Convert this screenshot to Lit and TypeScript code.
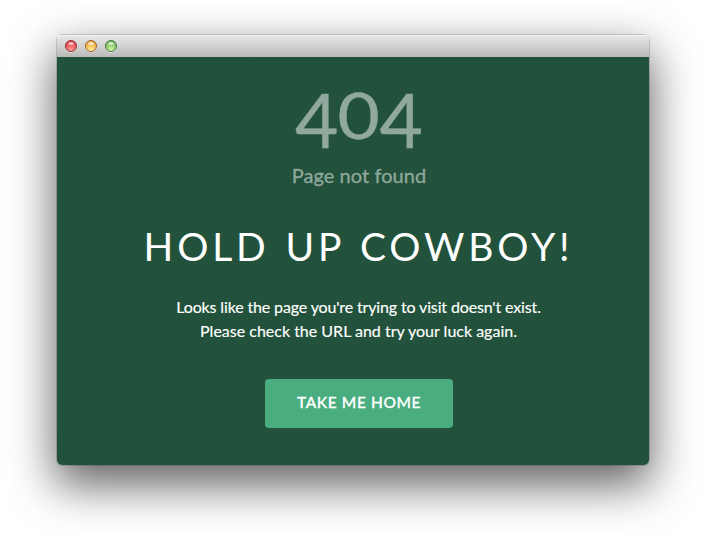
import { LitElement, html, css } from "lit";
import { customElement } from "lit/decorators.js";

@customElement("app-root")
export class AppRoot extends LitElement {
  static styles = css`
    :host {
      display: block;
      box-sizing: border-box;
      height: 544px;
      padding: 35px 57px 0 57px;
      background: #fff;
      overflow: hidden;
      font-family: Lato, "Open Sans", sans-serif;
    }
    .window {
      height: 430px;
      border-radius: 5px;
      box-shadow: 0 0 0 1px rgba(0, 0, 0, 0.16), 0 18px 46px 2px rgba(0, 0, 0, 0.62);
    }
    .bar {
      box-sizing: border-box;
      display: flex;
      gap: 8px;
      height: 22px;
      padding: 5px 8px;
      border-radius: 4px 4px 0 0;
      background: linear-gradient(#e9e9e9, #b9b9b9);
      box-shadow: inset 0 1px #f4f4f4;
    }
    .bar svg {
      display: block;
      width: 12px;
      height: 13px;
    }
    .page {
      box-sizing: border-box;
      display: flex;
      flex-direction: column;
      align-items: center;
      height: 408px;
      padding: 26px 0 0 9px;
      border-radius: 0 0 5px 5px;
      background: #22523b;
      color: #fff;
      white-space: nowrap;
    }
    .code {
      display: flex;
      gap: 2px;
      height: 72px;
      padding-left: 3px;
      align-items: flex-start;
      color: #90a89d;
      font-size: 75px;
      line-height: 72px;
      -webkit-text-stroke: 0.4px #90a89d;
    }
    .zero {
      display: inline-block;
      font-size: 64px;
      line-height: 63px;
      transform: scaleX(1.14);
    }
    .sub {
      height: 26px;
      margin-top: 7px;
      padding-left: 3px;
      color: #90a89d;
      font-size: 20px;
      line-height: 26px;
      letter-spacing: 0.05px;
      -webkit-text-stroke: 0.3px #90a89d;
    }
    h1 {
      height: 48px;
      margin: 34px 0 0;
      padding-left: 2px;
      font-size: 39px;
      font-weight: 400;
      line-height: 48px;
      letter-spacing: 3.85px;
      word-spacing: 2px;
    }
    .text {
      margin: 25px 0 0;
      padding-left: 2px;
      text-align: center;
      font-size: 16px;
      line-height: 24px;
      -webkit-text-stroke: 0.15px #fff;
    }
    .line {
      display: block;
    }
    .tight {
      letter-spacing: -0.14px;
    }
    button {
      width: 188px;
      height: 49px;
      margin: 36px 0 0 3px;
      padding: 0 0 3px;
      border: 0;
      border-radius: 4px;
      background: #49ad7f;
      color: #fff;
      font: 500 15.5px/46px Lato, sans-serif;
      letter-spacing: 0.6px;
      -webkit-text-stroke: 0.3px #fff;
    }
  `;

  private light(id: string, rim: string, base: string, glow: string) {
    return html`<svg viewBox="0 0 12 13">
      <defs>
        <radialGradient id=${id} cx="50%" cy="85%" r="75%">
          <stop offset="0" stop-color=${glow} />
          <stop offset="1" stop-color=${base} />
        </radialGradient>
      </defs>
      <circle cx="6" cy="7" r="5.7" fill="#fff" opacity=".45" />
      <circle cx="6" cy="6" r="5.5" fill="url(#${id})" stroke=${rim} />
      <ellipse cx="6" cy="3.4" rx="2.8" ry="1.5" fill="#fff" opacity=".65" />
    </svg>`;
  }

  render() {
    return html`
      <div class="window">
        <div class="bar">
          ${this.light("red", "#8f3836", "#e1383c", "#ffa09c")}
          ${this.light("amber", "#996431", "#eca43c", "#ffef9b")}
          ${this.light("green", "#4d7b3c", "#6eb75a", "#cbf6a4")}
        </div>
        <main class="page">
          <div class="code"><span>4</span><span class="zero">0</span><span>4</span></div>
          <div class="sub">Page not found</div>
          <h1>HOLD UP COWBOY!</h1>
          <p class="text">
            <span class="line tight">Looks like the page you're trying to visit doesn't exist.</span>
            <span class="line">Please check the URL and try your luck again.</span>
          </p>
          <button>TAKE ME HOME</button>
        </main>
      </div>
    `;
  }
}
